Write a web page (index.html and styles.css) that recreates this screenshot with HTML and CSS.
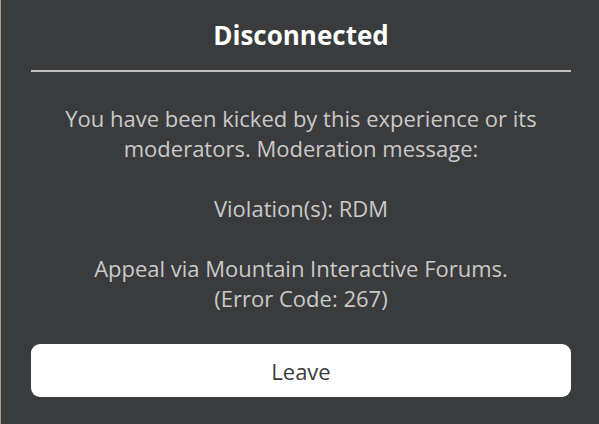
FILE: index.html
```html
<!DOCTYPE html>
<html>
<head>
<meta charset="utf-8">
<link rel="stylesheet" href="styles.css">
</head>
<body>
<div class="dialog">
  <h1 class="title">Disconnected</h1>
  <div class="divider"></div>
  <p class="message">You have been kicked by this experience or its moderators. Moderation message:<br><br>Violation(s): RDM<br><br>Appeal via Mountain Interactive Forums.<br>(Error Code: 267)</p>
  <button class="leave">Leave</button>
</div>
</body>
</html>
```
FILE: styles.css
```css
html, body {
  margin: 0;
  padding: 0;
  height: 100%;
}
body {
  background: #393b3d;
  border-left: 1px solid #a39f80;
  box-sizing: border-box;
  font-family: "Open Sans", "Noto Sans", sans-serif;
}
.dialog {
  display: flex;
  flex-direction: column;
  padding: 0 28px 0 30px;
  height: 100%;
  box-sizing: border-box;
}
.title {
  margin: 0;
  padding-top: 17px;
  height: 38px;
  font-size: 26px;
  font-weight: 700;
  line-height: 36px;
  color: #ffffff;
  text-align: center;
}
.divider {
  margin-top: 15px;
  height: 2px;
  background: #c0c0c0;
}
.message {
  margin: 31px 0 0;
  font-size: 22px;
  line-height: 30px;
  color: #cacaca;
  text-align: center;
}
.leave {
  margin-top: auto;
  margin-bottom: 27px;
  height: 53px;
  border: none;
  border-radius: 9px;
  background: #ffffff;
  color: #393b3d;
  font-family: "Open Sans", "Noto Sans", sans-serif;
  font-size: 22px;
}
```
